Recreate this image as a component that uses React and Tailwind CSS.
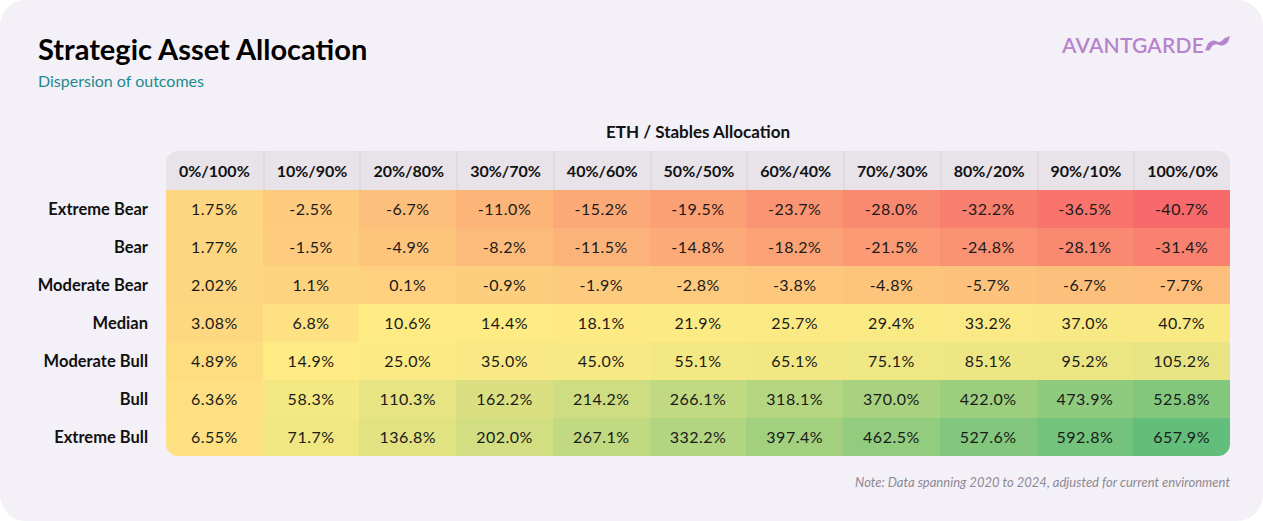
import React from 'react';

const cols = ['0%/100%', '10%/90%', '20%/80%', '30%/70%', '40%/60%', '50%/50%', '60%/40%', '70%/30%', '80%/20%', '90%/10%', '100%/0%'];

const rows = [
  { label: 'Extreme Bear', values: ['1.75%', '-2.5%', '-6.7%', '-11.0%', '-15.2%', '-19.5%', '-23.7%', '-28.0%', '-32.2%', '-36.5%', '-40.7%'] },
  { label: 'Bear', values: ['1.77%', '-1.5%', '-4.9%', '-8.2%', '-11.5%', '-14.8%', '-18.2%', '-21.5%', '-24.8%', '-28.1%', '-31.4%'] },
  { label: 'Moderate Bear', values: ['2.02%', '1.1%', '0.1%', '-0.9%', '-1.9%', '-2.8%', '-3.8%', '-4.8%', '-5.7%', '-6.7%', '-7.7%'] },
  { label: 'Median', values: ['3.08%', '6.8%', '10.6%', '14.4%', '18.1%', '21.9%', '25.7%', '29.4%', '33.2%', '37.0%', '40.7%'] },
  { label: 'Moderate Bull', values: ['4.89%', '14.9%', '25.0%', '35.0%', '45.0%', '55.1%', '65.1%', '75.1%', '85.1%', '95.2%', '105.2%'] },
  { label: 'Bull', values: ['6.36%', '58.3%', '110.3%', '162.2%', '214.2%', '266.1%', '318.1%', '370.0%', '422.0%', '473.9%', '525.8%'] },
  { label: 'Extreme Bull', values: ['6.55%', '71.7%', '136.8%', '202.0%', '267.1%', '332.2%', '397.4%', '462.5%', '527.6%', '592.8%', '657.9%'] },
];

// 3-colour scale: red -> yellow (50th percentile) -> green
const all = rows.flatMap(r => r.values.map(v => parseFloat(v))).sort((a, b) => a - b);
const min = all[0];
const max = all[all.length - 1];
const mid = all[Math.floor((all.length - 1) / 2)];
const RED = [248, 105, 107];
const YEL = [255, 235, 132];
const GRN = [99, 190, 123];

const mix = (a, b, t) => a.map((c, i) => Math.round(c + (b[i] - c) * t));

function cellColor(str) {
  const v = parseFloat(str);
  const c = v <= mid ? mix(RED, YEL, (v - min) / (mid - min)) : mix(YEL, GRN, (v - mid) / (max - mid));
  return `rgb(${c[0]}, ${c[1]}, ${c[2]})`;
}

function Logo() {
  return (
    <div className="flex items-center gap-[1px] text-[#b683cc]">
      <span className="text-[21px] font-semibold tracking-[0.2px] leading-none">AVANTGARDE</span>
      <svg width="25" height="16" viewBox="0 0 25 16" className="-mt-[4px]">
        <path
          d="M0 15.5 L3 8.5 C6 5.5 9 4.5 12 6.5 C14.5 8 17 6.5 19 3.5 L25 1 L23 7 C20.5 10 17 11.5 14 10 C11 8.5 8.5 9.5 6.5 12 L4.5 15.5 Z"
          fill="currentColor"
        />
      </svg>
    </div>
  );
}

export default function App() {
  return (
    <div className="w-[1263px] h-[521px] bg-white" style={{ fontFamily: 'Lato, "Noto Sans", sans-serif' }}>
      <div className="h-full rounded-[26px] bg-[#f4f0f7] pl-[38px] pr-[33px] pt-[31px] flex flex-col">
        {/* Header */}
        <div className="flex justify-between items-start">
          <div>
            <h1 className="text-[29px] leading-[36px] font-bold text-black">Strategic Asset Allocation</h1>
            <p className="mt-[4px] text-[16px] leading-[20px] text-[#1d8a90]">Dispersion of outcomes</p>
          </div>
          <div className="pt-[3px]">
            <Logo />
          </div>
        </div>

        {/* Table */}
        <div className="mt-[22px] flex">
          <div className="w-[128px] shrink-0 flex flex-col">
            <div className="h-[39px] mt-[38px]" />
            {rows.map(r => (
              <div key={r.label} className="h-[38px] flex items-center justify-end pr-[18px] whitespace-nowrap text-[16.5px] font-bold text-[#111]">
                {r.label}
              </div>
            ))}
          </div>
          <div className="flex-1 flex flex-col">
            <div className="h-[38px] flex items-center justify-center text-[17px] font-bold text-[#111]">
              ETH / Stables Allocation
            </div>
            <div className="rounded-[12px] overflow-hidden">
              <div className="grid grid-cols-11 h-[39px] bg-[#e7e3e9]">
                {cols.map((c, i) => (
                  <div
                    key={c}
                    className={`flex items-center justify-center text-[16px] font-bold text-[#111] ${i > 0 ? 'border-l-2 border-[#dfdae1]' : ''}`}
                  >
                    {c}
                  </div>
                ))}
              </div>
              {rows.map(r => (
                <div key={r.label} className="grid grid-cols-11 h-[38px]">
                  {r.values.map((v, i) => (
                    <div
                      key={i}
                      className="flex items-center justify-center text-[16px] tracking-[0.5px] text-[#1a1a1a]"
                      style={{ backgroundColor: cellColor(v) }}
                    >
                      {v}
                    </div>
                  ))}
                </div>
              ))}
            </div>
          </div>
        </div>

        <p className="mt-[17px] text-right text-[13px] italic text-[#8d8893]">
          Note: Data spanning 2020 to 2024, adjusted for current environment
        </p>
      </div>
    </div>
  );
}
